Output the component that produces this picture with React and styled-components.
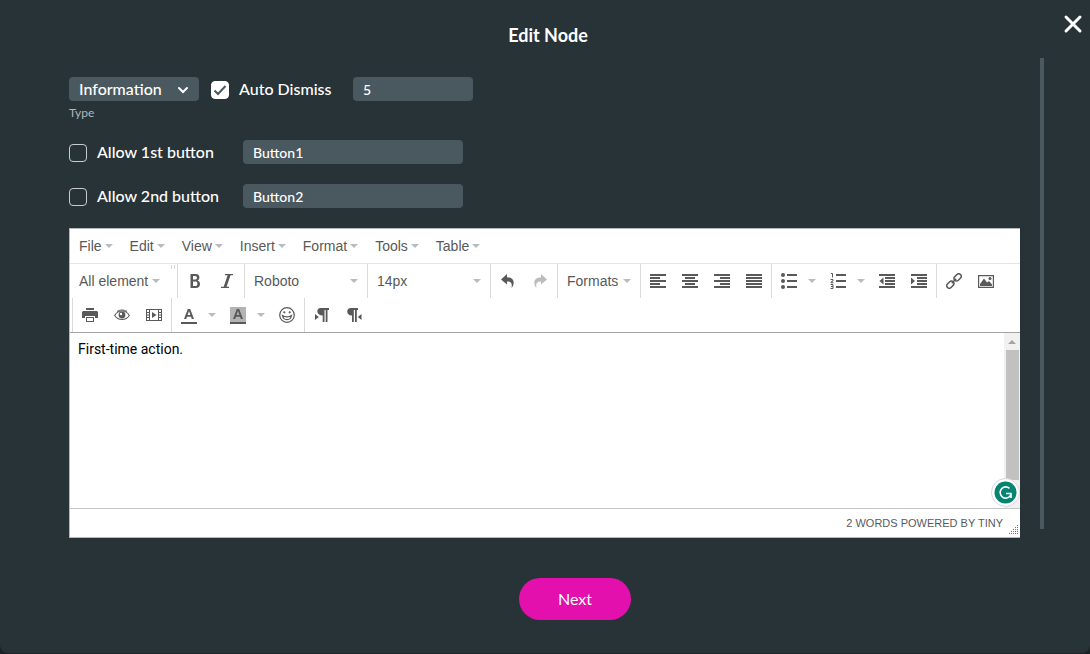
import React, { useState } from "react";
import styled, { createGlobalStyle } from "styled-components";

const GlobalStyle = createGlobalStyle`
  *, *::before, *::after { box-sizing: border-box; }
  body { margin: 0; background: #1c2327; }
  button, input, select { margin: 0; font: inherit; color: inherit; }
`;

const Dialog = styled.main`
  position: relative;
  display: flex;
  flex-direction: column;
  min-height: calc(100vh - 1px);
  border-radius: 0 0 8px 8px;
  background: #283338;
  color: #fff;
  font-family: Lato, "Liberation Sans", sans-serif;
  font-size: 16px;
  line-height: 20px;
`;

const Title = styled.h1`
  margin: 0;
  padding: 24px 0 12px 6px;
  font-size: 18px;
  line-height: 22px;
  font-weight: 700;
  text-align: center;
`;

const CloseButton = styled.button`
  position: absolute;
  top: 12px;
  right: 5px;
  width: 24px;
  height: 24px;
  padding: 0;
  border: 0;
  background: none;
  cursor: pointer;
  svg { display: block; }
`;

const Body = styled.div`
  display: flex;
  gap: 20px;
  padding: 0 46px 0 69px;
`;

const Content = styled.div`
  flex: 1;
  min-width: 0;
  padding-top: 19px;
`;

const ScrollRail = styled.div`
  width: 4px;
  height: 471px;
  background: #4a585f;
`;

const OptionRow = styled.div`
  display: flex;
  align-items: center;
  height: 24px;
  margin-bottom: ${(p) => p.$gap || 0}px;
`;

const SelectBox = styled.div`
  position: relative;
  width: 130px;
  margin-right: 12px;
  svg {
    position: absolute;
    right: 10px;
    top: 6px;
    pointer-events: none;
  }
`;

const TypeSelect = styled.select`
  display: block;
  appearance: none;
  width: 100%;
  height: 24px;
  padding: 0 10px;
  border: 0;
  border-radius: 4px;
  background: #4a585f;
  font-weight: 500;
`;

const TypeLabel = styled.label`
  display: block;
  height: 39px;
  padding-top: 4px;
  font-size: 12px;
  line-height: 16px;
  color: #b4b7b9;
`;

const CheckLabel = styled.label`
  display: flex;
  align-items: center;
  gap: 10px;
  width: ${(p) => p.$width}px;
  font-weight: 500;
`;

const CheckFrame = styled.span`
  display: grid;
  width: 18px;
  height: 18px;
  margin-top: 2px;
  > * { grid-area: 1 / 1; }
  svg { pointer-events: none; z-index: 1; }
`;

const CheckInput = styled.input`
  appearance: none;
  width: 18px;
  height: 18px;
  border: 1px solid #c9cccd;
  border-radius: 4px;
  background: transparent;
  &:checked { background: #fff; border-color: #fff; }
`;

const TextField = styled.input`
  width: ${(p) => p.$width}px;
  height: 24px;
  padding: 0 10px;
  border: 0;
  border-radius: 4px;
  background: #4a585f;
  font-size: 14px;
  font-weight: 500;
`;

const Editor = styled.section`
  border: 1px solid #b5b9bb;
  border-right-width: 0;
  background: #fff;
  color: #595959;
  font-family: "Liberation Sans", Arial, sans-serif;
  font-size: 14px;
`;

const MenuBar = styled.nav`
  display: flex;
  gap: 1px;
  height: 35px;
  padding-left: 1px;
  border-bottom: 1px solid #e2e4e7;
`;

const Toolbar = styled.div`
  border-bottom: 1px solid #a5a5a5;
`;

const ToolRow = styled.div`
  display: flex;
  height: 34px;
  padding-left: ${(p) => p.$indent || 0}px;
`;

const ToolGroup = styled.div`
  display: flex;
  padding: 0 1px;
  border-left: ${(p) => (p.$first ? 0 : "1px solid #d9d9d9")};
`;

const DropTick = styled.span`
  width: 4px;
  height: 4px;
  margin: 1px 1px 0 3px;
  border: 1px solid #d9d9d9;
  border-width: 0 1px;
`;

const TextButton = styled.button`
  display: flex;
  align-items: center;
  justify-content: space-between;
  gap: ${(p) => (p.$width ? 0 : 3)}px;
  width: ${(p) => (p.$width ? p.$width + "px" : "auto")};
  padding: 0 8px;
  border: 0;
  background: none;
  white-space: nowrap;
`;

const IconButton = styled.button`
  display: grid;
  place-items: center;
  width: ${(p) => (p.$narrow ? 17 : 32)}px;
  padding: 0 ${(p) => (p.$narrow ? 4 : 0)}px 0 0;
  border: 0;
  background: none;
  opacity: ${(p) => (p.disabled ? 0.4 : 1)};
`;

const Caret = styled.i`
  width: 8px;
  border: 4px solid transparent;
  border-top-color: #b5bcc2;
  border-bottom: 0;
`;

const EditArea = styled.div`
  position: relative;
  display: flex;
  height: 175px;
`;

const Page = styled.div`
  flex: 1;
  padding: 6px 8px;
  color: #000;
  font-family: Roboto, "Liberation Sans", sans-serif;
  outline: 0;
`;

const ScrollTrack = styled.div`
  display: flex;
  flex-direction: column;
  align-items: center;
  width: 16px;
  background: #f1f1f1;
  svg { display: block; }
`;

const ScrollThumb = styled.div`
  width: 13px;
  height: 130px;
  background: #c1c1c1;
`;

const Assistant = styled.button`
  position: absolute;
  right: 0;
  bottom: 1px;
  width: 29px;
  height: 29px;
  padding: 0;
  border: 0;
  background: none;
  svg { display: block; }
`;

const StatusBar = styled.footer`
  display: flex;
  justify-content: flex-end;
  height: 29px;
  border-top: 1px solid #c5c5c5;
  font-size: 11px;
  line-height: 28px;
  text-transform: uppercase;
`;

const Grip = styled.svg`
  align-self: flex-end;
  margin: 0 1px 2px 5px;
`;

const Actions = styled.div`
  display: flex;
  justify-content: center;
  padding: 40px 0 32px 60px;
`;

const NextButton = styled.button`
  width: 112px;
  height: 42px;
  border: 0;
  border-radius: 21px;
  background: #e410ad;
`;

const shapes = {
  bold: <path d="M3.500 1H8.500C11 1 12.400 2.200 12.400 4.300C12.400 5.900 11.700 7 10.500 7.400C12 7.800 13 9 13 10.900C13 13.600 11.400 15 8.900 15H3.500ZM6 3V6.600H8C9.300 6.600 9.900 6 9.900 4.800S9.300 3 8 3ZM6 8.500V13H8.300C9.700 13 10.400 12.300 10.400 10.700S9.700 8.500 8.300 8.500Z" fillRule="evenodd" />,
  italic: <path d="M6 1H14V2.200H11.500L7.600 13.800H10V15H2V13.800H4.700L8.600 2.200H6Z" />,
  undo: <path d="M7 1L1 6.500L7 11.500V8.500C11 8.300 12.500 10 11.500 15C15.500 10 14 4.500 7 4.300Z" />,
  redo: <path d="M9 1L15 6.500L9 11.500V8.500C5 8.300 3.500 10 4.500 15C.5 10 2 4.500 9 4.300Z" />,
  left: <path d="M0 1H16V3H0ZM0 4H10V6H0ZM0 7H16V9H0ZM0 10H10V12H0ZM0 13H16V15H0Z" />,
  center: <path d="M0 1H16V3H0ZM3 4H13V6H3ZM0 7H16V9H0ZM3 10H13V12H3ZM0 13H16V15H0Z" />,
  right: <path d="M0 1H16V3H0ZM6 4H16V6H6ZM0 7H16V9H0ZM6 10H16V12H6ZM0 13H16V15H0Z" />,
  justify: <path d="M0 1H16V3H0ZM0 4H16V6H0ZM0 7H16V9H0ZM0 10H16V12H0ZM0 13H16V15H0Z" />,
  bullets: (
    <>
      <path d="M6 1H16V3H6ZM6 7H16V9H6ZM6 13H16V15H6Z" />
      <circle cx="2" cy="2" r="2" /><circle cx="2" cy="8" r="2" /><circle cx="2" cy="14" r="2" />
    </>
  ),
  numbers: (
    <>
      <path d="M6 1H16V3H6ZM6 7H16V9H6ZM6 13H16V15H6Z" />
      <path d="M1 .5H2.500V4.500M.5 6.500H3V8L1 9V9.800H3.500M.5 11.500H3V15.500H.5M1 13.500H3" fill="none" stroke="currentColor" />
    </>
  ),
  outdent: <path d="M0 1H16V3H0ZM6 4H16V6H6ZM6 7H16V9H6ZM6 10H16V12H6ZM0 13H16V15H0ZM4.500 4.500V11.500L.5 8Z" />,
  indent: <path d="M0 1H16V3H0ZM6 4H16V6H6ZM6 7H16V9H6ZM6 10H16V12H6ZM0 13H16V15H0ZM0 4.500V11.500L4 8Z" />,
  link: (
    <g fill="none" stroke="currentColor" strokeWidth="1.500">
      <rect x="-4.500" y="-2.500" width="8" height="5" rx="2.500" transform="translate(4.700 11.300) rotate(-45)" />
      <rect x="-3.500" y="-2.500" width="8" height="5" rx="2.500" transform="translate(11.300 4.700) rotate(-45)" />
      <path d="M5.800 10.200L10.200 5.800" />
    </g>
  ),
  image: (
    <>
      <path d="M.6 2.600H15.400V14.400H.6Z" fill="none" stroke="currentColor" strokeWidth="1.200" />
      <path d="M2 13V11L6 5.500L9 9.500L11 8L14 11.500V13Z" /><circle cx="12" cy="5.500" r="1.500" />
    </>
  ),
  print: <path d="M4 1H12V3H4ZM1 4H15L16 5V11H13V9H3V11H0V5ZM4 10H12V15H4ZM5 11V14H11V11Z" fillRule="evenodd" />,
  eye: (
    <>
      <path d="M.7 8.500C4 2.500 12 2.500 15.300 8.500C12 13.800 4 13.800 .7 8.500Z" fill="none" stroke="currentColor" strokeWidth="1.100" />
      <path d="M3 4.500C6 2.500 10 2.500 13 4.500" fill="none" stroke="currentColor" />
      <circle cx="8" cy="8" r="3.400" /><circle cx="7" cy="7" r="1.200" fill="#fff" />
    </>
  ),
  media: (
    <>
      <path d="M0 2H16V14H0ZM4 3V13H12V3ZM1 3V5H3V3ZM1 6V7.500H3V6ZM1 8.500V10H3V8.500ZM1 11V13H3V11ZM13 3V5H15V3ZM13 6V7.500H15V6ZM13 8.500V10H15V8.500ZM13 11V13H15V11Z" fillRule="evenodd" />
      <path d="M6 5V11L10.500 8Z" />
    </>
  ),
  smile: (
    <>
      <circle cx="8" cy="8" r="7.300" fill="none" stroke="currentColor" strokeWidth="1.200" />
      <circle cx="5.300" cy="5.300" r="1.100" /><circle cx="10.700" cy="5.300" r="1.100" />
      <path d="M3.500 8.500C4.500 14 11.500 14 12.500 8.500C10 10.300 6 10.300 3.500 8.500Z" fill="none" stroke="currentColor" strokeWidth="1.200" />
    </>
  ),
  ltr: <path d="M6.500 1H15V3H13.500V15H11.700V3H10.500V15H8.700V8.500C2 8.500 2 1 6.500 1ZM1 7V13L4.800 10Z" />,
  rtl: <path d="M5 1H12V3H10.800V15H9V3H7.800V15H6V8.500C-.2 8.500 -.2 1 5 1ZM15.500 7V13L11.800 10Z" />,
  foreColor: (
    <path d="M0 15H16V17H0ZM3 12L6.800 2H9.200L13 12H10.800L10 9.700H6L5.200 12ZM6.600 8H9.400L8 4Z" fillRule="evenodd" />
  ),
  backColor: (
    <>
      <path d="M0 0H16V17H0Z" fill="#b3b3b3" />
      <path d="M0 15H16V17H0ZM3 12L6.800 2H9.200L13 12H10.800L10 9.700H6L5.200 12ZM6.600 8H9.400L8 4Z" fillRule="evenodd" />
    </>
  ),
};

const Tool = ({ name, label, disabled }) => {
  const height = name.endsWith("Color") ? 17 : 16;
  return (
    <IconButton type="button" aria-label={label} title={label} disabled={disabled}>
      <svg width="16" height={height} viewBox={`0 0 16 ${height}`} fill="currentColor">
        {shapes[name]}
      </svg>
    </IconButton>
  );
};

const SplitTool = ({ name, label }) => (
  <>
    <Tool name={name} label={label} />
    <IconButton type="button" $narrow aria-label={label + " options"}><Caret /></IconButton>
  </>
);

const DropButton = ({ children, width }) => (
  <TextButton type="button" $width={width}>{children}<Caret /></TextButton>
);

const Check = ({ label, width, checked, onChange }) => (
  <CheckLabel $width={width}>
    <CheckFrame>
      <CheckInput type="checkbox" checked={checked} onChange={(e) => onChange(e.target.checked)} />
      {checked && (
        <svg width="18" height="18" viewBox="0 0 18 18" fill="none" stroke="#4a585f" strokeWidth="2">
          <path d="M3.500 9.500L7 13L14.500 5" />
        </svg>
      )}
    </CheckFrame>
    {label}
  </CheckLabel>
);

export default function App() {
  const [auto, setAuto] = useState(true);
  const [first, setFirst] = useState(false);
  const [second, setSecond] = useState(false);

  return (
    <Dialog>
      <GlobalStyle />
      <Title>Edit Node</Title>
      <CloseButton type="button" aria-label="Close">
        <svg width="24" height="24" viewBox="0 0 24 24" stroke="#fff" strokeWidth="3" strokeLinecap="round">
          <path d="M5 5L19 19M19 5L5 19" />
        </svg>
      </CloseButton>
      <Body>
        <Content>
          <OptionRow>
            <SelectBox>
              <TypeSelect id="node-type" defaultValue="Information">
                <option>Information</option>
              </TypeSelect>
              <svg width="12" height="12" viewBox="0 0 12 12" fill="none" stroke="#fff" strokeWidth="2" strokeLinecap="round">
                <path d="M2 5L6 9L10 5" />
              </svg>
            </SelectBox>
            <Check label="Auto Dismiss" width={142} checked={auto} onChange={setAuto} />
            <TextField $width={120} defaultValue="5" aria-label="Dismiss after" />
          </OptionRow>
          <TypeLabel htmlFor="node-type">Type</TypeLabel>
          <OptionRow $gap={20}>
            <Check label="Allow 1st button" width={174} checked={first} onChange={setFirst} />
            <TextField $width={220} defaultValue="Button1" aria-label="First button text" />
          </OptionRow>
          <OptionRow $gap={20}>
            <Check label="Allow 2nd button" width={174} checked={second} onChange={setSecond} />
            <TextField $width={220} defaultValue="Button2" aria-label="Second button text" />
          </OptionRow>
          <Editor>
            <MenuBar>
              {["File", "Edit", "View", "Insert", "Format", "Tools", "Table"].map((m) => (
                <DropButton key={m}>{m}</DropButton>
              ))}
            </MenuBar>
            <Toolbar>
              <ToolRow>
                <ToolGroup $first>
                  <DropButton width={97}>All element</DropButton>
                  <DropTick />
                </ToolGroup>
                <ToolGroup>
                  <Tool name="bold" label="Bold" />
                  <Tool name="italic" label="Italic" />
                </ToolGroup>
                <ToolGroup><DropButton width={120}>Roboto</DropButton></ToolGroup>
                <ToolGroup><DropButton width={120}>14px</DropButton></ToolGroup>
                <ToolGroup>
                  <Tool name="undo" label="Undo" />
                  <Tool name="redo" label="Redo" disabled />
                </ToolGroup>
                <ToolGroup><DropButton width={80}>Formats</DropButton></ToolGroup>
                <ToolGroup>
                  <Tool name="left" label="Align left" />
                  <Tool name="center" label="Align center" />
                  <Tool name="right" label="Align right" />
                  <Tool name="justify" label="Justify" />
                </ToolGroup>
                <ToolGroup>
                  <SplitTool name="bullets" label="Bullet list" />
                  <SplitTool name="numbers" label="Numbered list" />
                  <Tool name="outdent" label="Decrease indent" />
                  <Tool name="indent" label="Increase indent" />
                </ToolGroup>
                <ToolGroup>
                  <Tool name="link" label="Insert link" />
                  <Tool name="image" label="Insert image" />
                </ToolGroup>
              </ToolRow>
              <ToolRow $indent={2}>
                <ToolGroup>
                  <Tool name="print" label="Print" />
                  <Tool name="eye" label="Preview" />
                  <Tool name="media" label="Insert video" />
                </ToolGroup>
                <ToolGroup>
                  <SplitTool name="foreColor" label="Text color" />
                  <SplitTool name="backColor" label="Background color" />
                  <Tool name="smile" label="Emoticons" />
                </ToolGroup>
                <ToolGroup>
                  <Tool name="ltr" label="Left to right" />
                  <Tool name="rtl" label="Right to left" />
                </ToolGroup>
              </ToolRow>
            </Toolbar>
            <EditArea>
              <Page contentEditable suppressContentEditableWarning role="textbox" aria-label="Message">
                First-time action.
              </Page>
              <ScrollTrack>
                <svg width="16" height="17" viewBox="0 0 16 17"><path d="M4 11L8 7L12 11Z" fill="#a3a3a3" /></svg>
                <ScrollThumb />
              </ScrollTrack>
              <Assistant type="button" aria-label="Writing assistant">
                <svg width="29" height="29" viewBox="0 0 29 29" fill="none">
                  <circle cx="14.500" cy="14.500" r="14" fill="#fff" stroke="#d5d8df" />
                  <circle cx="14.500" cy="14.500" r="11" fill="#078372" />
                  <path d="M18.500 10.300A5.600 5.600 0 1 0 19.500 17.500M15 15.500H20V20" stroke="#fff" strokeWidth="1.600" />
                </svg>
              </Assistant>
            </EditArea>
            <StatusBar>
              <span>2 words Powered by Tiny</span>
              <Grip width="11" height="11" viewBox="0 0 11 11" fill="#777">
                {[0, 1, 2, 3, 4].map((r) =>
                  Array.from({ length: r + 1 }, (_, c) => (
                    <rect key={r + "-" + c} x={9 - c * 2} y={1 + r * 2} width="1" height="1" />
                  ))
                )}
              </Grip>
            </StatusBar>
          </Editor>
        </Content>
        <ScrollRail />
      </Body>
      <Actions>
        <NextButton type="button">Next</NextButton>
      </Actions>
    </Dialog>
  );
}
